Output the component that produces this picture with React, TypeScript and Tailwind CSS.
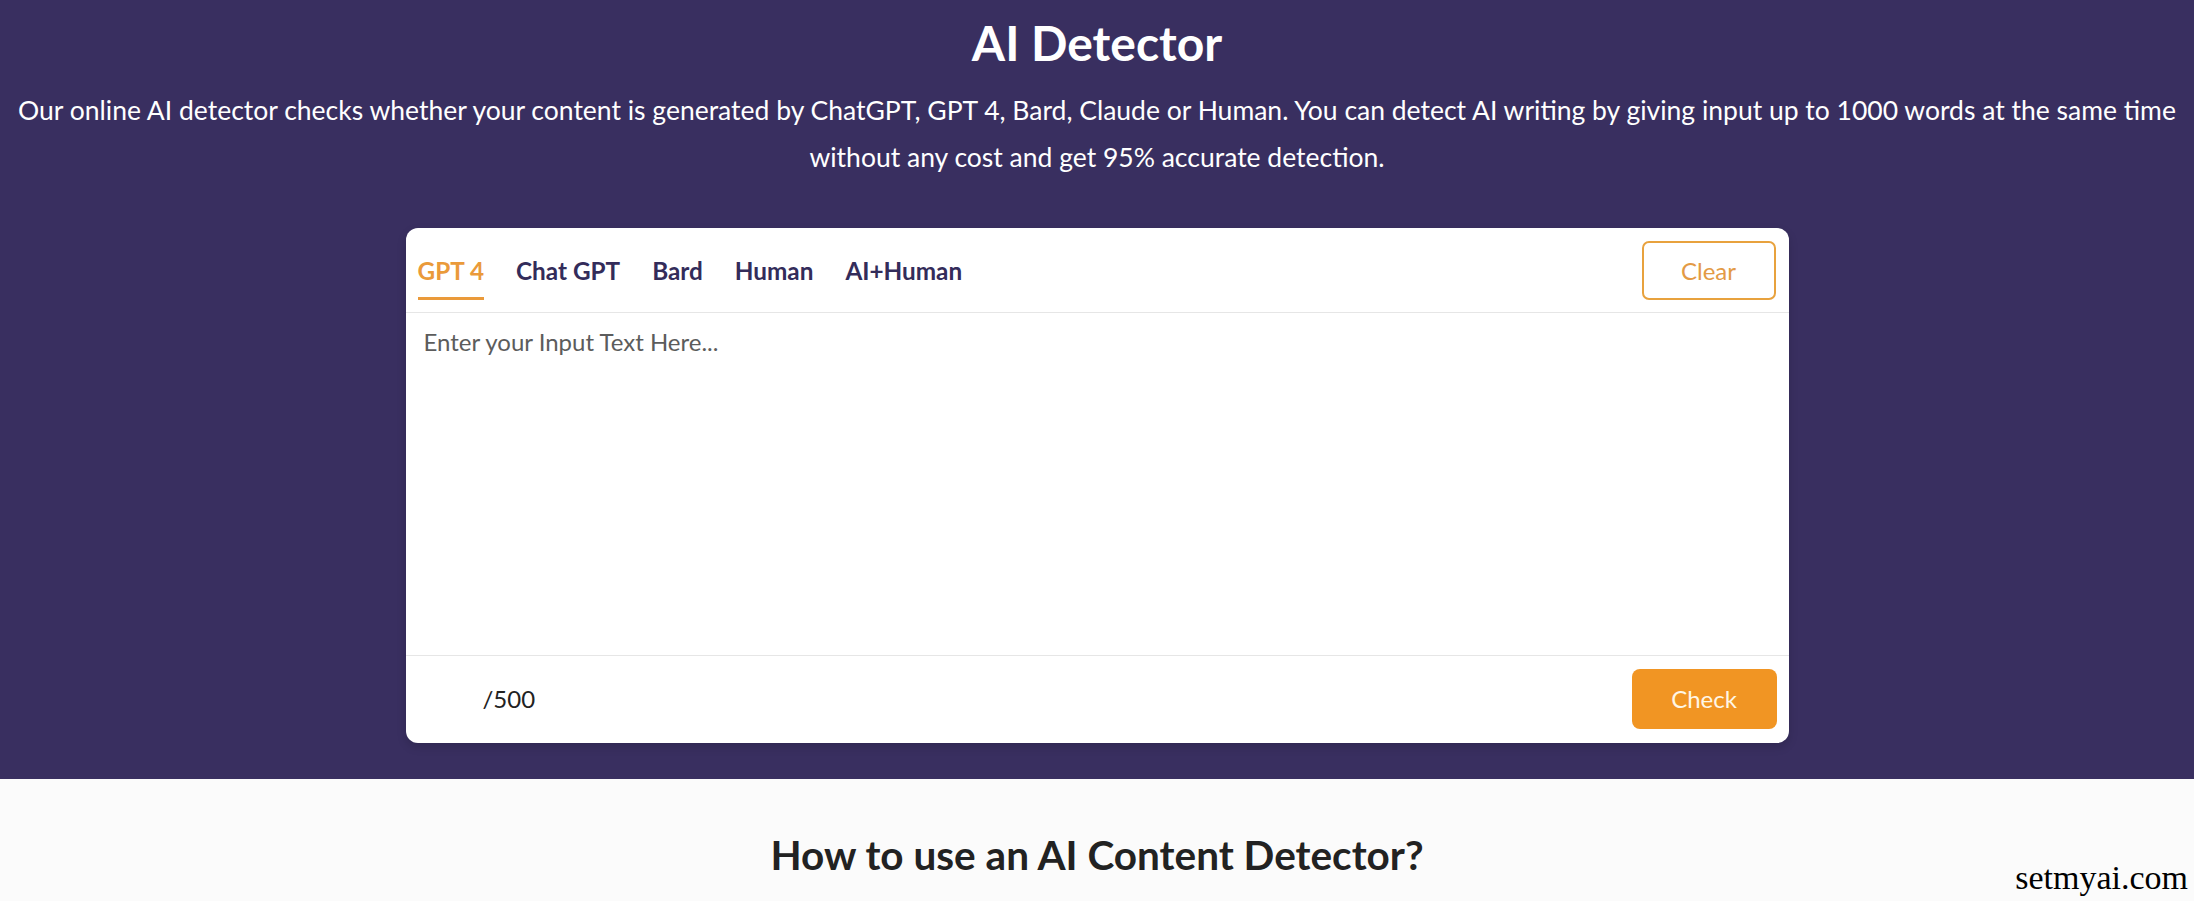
import { useState } from "react";

const tabs = ["GPT 4", "Chat GPT", "Bard", "Human", "AI+Human"];

const App = () => {
  const [active, setActive] = useState("GPT 4");
  const [text, setText] = useState("");

  return (
    <div className="relative min-h-[901px] bg-[#fbfbfb] font-['Lato','Open_Sans',sans-serif]">
      <section className="bg-[#392f60] px-3 pt-[14px] pb-[36px]">
        <h1 className="text-center text-[48px] font-bold leading-[58px] text-white">
          AI Detector
        </h1>
        <p className="mt-[15px] text-center text-[26.5px] leading-[47px] text-white">
          Our online AI detector checks whether your content is generated by
          ChatGPT, GPT 4, Bard, Claude or Human. You can detect AI writing by
          giving input up to 1000 words at the same time without any cost and
          get 95% accurate detection.
        </p>

        <div className="mx-auto mt-[47px] w-[1383px] overflow-hidden rounded-[12px] bg-white shadow-[0_4px_10px_rgba(0,0,0,0.15)]">
          <div className="flex items-center justify-between border-b border-[#e6e6e6] pl-[12px] pr-[13px] pt-[13px] pb-[12px]">
            <div className="flex items-center gap-[32px] self-stretch">
              {tabs.map((t) => (
                <button
                  key={t}
                  onClick={() => setActive(t)}
                  className={`flex h-full flex-col justify-center border-b-[3px] pt-[4px] text-[24.3px] font-bold leading-none ${
                    active === t
                      ? "border-[#ea9a3a] text-[#ea9a3a]"
                      : "border-transparent text-[#332c5a]"
                  }`}
                >
                  {t}
                </button>
              ))}
            </div>
            <button
              onClick={() => setText("")}
              className="h-[59px] w-[134px] rounded-[7px] border-2 border-[#e8a23e] text-[24px] text-[#e39a45]"
            >
              Clear
            </button>
          </div>

          <textarea
            value={text}
            onChange={(e) => setText(e.target.value)}
            placeholder="Enter your Input Text Here..."
            className="block h-[342px] w-full resize-none px-[18px] pt-[13px] text-[24px] leading-[32px] text-[#333] outline-none placeholder:text-[#5c5c5c]"
          />

          <div className="flex items-center justify-between border-t border-[#e6e6e6] pl-[77px] pr-[12px] pt-[13px] pb-[14px]">
            <span className="text-[24px] text-[#222]">/500</span>
            <button className="h-[60px] w-[145px] rounded-[8px] bg-[#f19523] text-[24px] text-[#fff6e6]">
              Check
            </button>
          </div>
        </div>
      </section>

      <section className="pt-[52px]">
        <h2 className="text-center text-[40.5px] font-bold leading-[48px] text-[#222]">
          How to use an AI Content Detector?
        </h2>
      </section>

      <div className="absolute right-[6px] bottom-[-2px] font-['Liberation_Serif',serif] text-[34px] text-black">
        setmyai.com
      </div>
    </div>
  );
};

export default App;
